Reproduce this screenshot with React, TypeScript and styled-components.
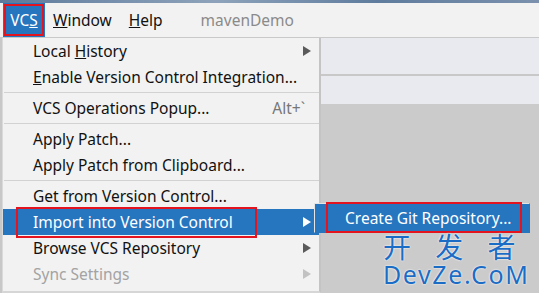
import React from "react";
import styled, { createGlobalStyle } from "styled-components";

const GlobalStyle = createGlobalStyle`
  html, body {
    margin: 0;
    padding: 0;
    background: #cbcbcb;
  }
  body {
    font-family: "Noto Sans", "Open Sans", Arial, sans-serif;
  }
`;

type Item = {
  label: React.ReactNode;
  shortcut?: string;
  submenu?: boolean;
  disabled?: boolean;
  active?: boolean;
  marked?: boolean;
};

const groups: Item[][] = [
  [
    { label: <>Local <u>H</u>istory</>, submenu: true },
    { label: <><u>E</u>nable Version Control Integration...</> },
  ],
  [{ label: "VCS Operations Popup...", shortcut: "Alt+`" }],
  [{ label: "Apply Patch..." }, { label: "Apply Patch from Clipboard..." }],
  [
    { label: "Get from Version Control..." },
    { label: "Import into Version Control", submenu: true, active: true, marked: true },
    { label: "Browse VCS Repository", submenu: true },
    { label: "Sync Settings", submenu: true, disabled: true },
  ],
];

const Arrow: React.FC<{ color: string }> = ({ color }) => (
  <svg width="8" height="10" viewBox="0 0 8 10">
    <polygon points="0,0 8,5 0,10" fill={color} />
  </svg>
);

export default function App() {
  return (
    <>
      <GlobalStyle />
      <Screen>
        <TitleStrip />
        <MenuBar>
          <TopItem $open>
            VC<u>S</u>
            <RedMark $top={1} $left={1} $width={40} $height={32} />
          </TopItem>
          <TopItem>
            <u>W</u>indow
          </TopItem>
          <TopItem>
            <u>H</u>elp
          </TopItem>
          <ProjectName>mavenDemo</ProjectName>
        </MenuBar>
        <Body>
          <Gutter />
          <Popup>
            {groups.map((g, gi) => (
              <React.Fragment key={gi}>
                {gi > 0 && <Separator />}
                {g.map((it, i) => (
                  <Row key={i} $active={it.active} $disabled={it.disabled}>
                    <Label>{it.label}</Label>
                    {it.shortcut && <Shortcut>{it.shortcut}</Shortcut>}
                    {it.submenu && (
                      <Arrow color={it.active ? "#ffffff" : it.disabled ? "#c2c2c2" : "#5a5a5a"} />
                    )}
                    {it.marked && <RedMark $top={-2} $left={13} $width={241} $height={31} />}
                  </Row>
                ))}
              </React.Fragment>
            ))}
          </Popup>
          <EditorArea>
            <TabStrip $h={36} />
            <TabStrip $h={28} />
          </EditorArea>
        </Body>
        <Submenu>
          <SubRow>
            Create Git Repository...
            <RedMark $top={-2} $left={11} $width={196} $height={31} />
          </SubRow>
        </Submenu>
        <Watermark>
          <WmCn>开 发 者</WmCn>
          <WmEn>DevZe.CoM</WmEn>
        </Watermark>
      </Screen>
    </>
  );
}

const Screen = styled.div`
  position: relative;
  width: 539px;
  height: 293px;
  overflow: hidden;
  display: flex;
  flex-direction: column;
  background: #cbcbcb;
  font-size: 15.5px;
  color: #111;
`;

const TitleStrip = styled.div`
  height: 3px;
  background: linear-gradient(90deg, #5d7a9c, #8ea3bb 40%, #5f7c9e 70%, #7b91ad);
`;

const MenuBar = styled.div`
  height: 35px;
  display: flex;
  align-items: stretch;
  background: #f2f2f2;
  padding-left: 3px;
  border-bottom: 1px solid #c9c9c9;
`;

const TopItem = styled.div<{ $open?: boolean }>`
  position: relative;
  display: flex;
  align-items: center;
  justify-content: center;
  padding: 0 8px;
  margin-right: ${(p) => (p.$open ? "0" : "1px")};
  width: ${(p) => (p.$open ? "42px" : "auto")};
  box-sizing: border-box;
  background: ${(p) => (p.$open ? "#2675bf" : "transparent")};
  color: ${(p) => (p.$open ? "#fff" : "#111")};
`;

const ProjectName = styled.div`
  display: flex;
  align-items: center;
  margin-left: 29px;
  color: #8a8a8a;
`;

const Body = styled.div`
  flex: 1;
  display: flex;
  align-items: flex-start;
`;

const Gutter = styled.div`
  width: 2px;
  align-self: stretch;
  background: #c8c8c8;
`;

const Popup = styled.div`
  width: 319px;
  box-sizing: border-box;
  background: #f2f2f2;
  border-left: 1px solid #dadada;
  border-right: 2px solid #c4c4c4;
  border-bottom: 2px solid #d6d6d6;
  padding: 0 0 4px;
`;

const Row = styled.div<{ $active?: boolean; $disabled?: boolean }>`
  position: relative;
  height: 26px;
  display: flex;
  align-items: center;
  padding: 0 8px 0 30px;
  background: ${(p) => (p.$active ? "#2675bf" : "transparent")};
  color: ${(p) => (p.$active ? "#fff" : p.$disabled ? "#a3a3a3" : "#111")};
  white-space: nowrap;
`;

const Label = styled.span`
  flex: 1;
`;

const Shortcut = styled.span`
  color: #777;
  margin-right: 6px;
`;

const Separator = styled.div`
  height: 1px;
  margin: 2px 0 2px 1px;
  background: #d2d2d2;
`;

const EditorArea = styled.div`
  flex: 1;
  display: flex;
  flex-direction: column;
`;

const TabStrip = styled.div<{ $h: number }>`
  height: ${(p) => p.$h}px;
  background: #e8eaef;
  border-bottom: 2px solid #c8c8c8;
  &:last-child {
    border-bottom: none;
  }
`;

const Submenu = styled.div`
  position: absolute;
  left: 314px;
  top: 203px;
  width: 216px;
  box-sizing: border-box;
  background: #2675bf;
  border: 1px solid #e4e4e4;
  border-right-color: #2675bf;
  border-bottom-color: #2675bf;
`;

const SubRow = styled.div`
  position: relative;
  height: 28px;
  display: flex;
  align-items: center;
  padding-left: 30px;
  color: #fff;
  white-space: nowrap;
`;

const RedMark = styled.div<{ $top: number; $left: number; $width: number; $height: number }>`
  position: absolute;
  top: ${(p) => p.$top}px;
  left: ${(p) => p.$left}px;
  width: ${(p) => p.$width}px;
  height: ${(p) => p.$height}px;
  box-sizing: border-box;
  border: 2px solid #e3141e;
  pointer-events: none;
`;

const Watermark = styled.div`
  position: absolute;
  left: 383px;
  top: 233px;
  display: flex;
  flex-direction: column;
  color: #1b6cc4;
  text-shadow: 0 0 2px #fff, 0 0 1px #fff;
`;

const WmCn = styled.div`
  font-family: "Noto Sans CJK SC", sans-serif;
  font-size: 28px;
  line-height: 26px;
  letter-spacing: 9px;
  white-space: pre;
`;

const WmEn = styled.div`
  font-family: "Noto Sans", sans-serif;
  font-size: 25px;
  line-height: 30px;
  letter-spacing: 1.6px;
`;
